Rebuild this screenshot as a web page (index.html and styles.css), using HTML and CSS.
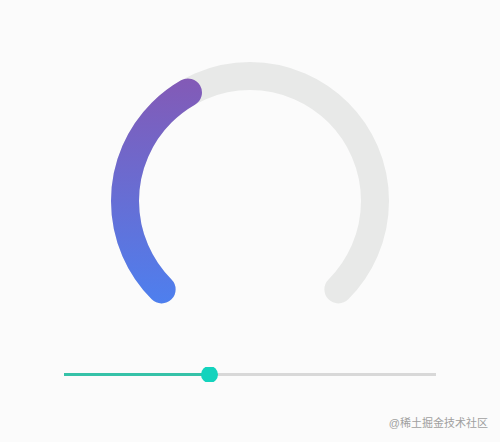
FILE: index.html
```html
<!DOCTYPE html>
<html lang="zh-CN">
<head>
  <meta charset="UTF-8" />
  <meta name="viewport" content="width=device-width, initial-scale=1.0" />
  <title>Progress</title>
  <link rel="stylesheet" href="styles.css">
</head>
<body>

  <main class="container">
    <svg class="gauge" viewBox="0 0 278 242" aria-hidden="true">
      <defs>
        <linearGradient id="gaugeColor" gradientUnits="userSpaceOnUse" x1="0" y1="16" x2="0" y2="240">
          <stop offset="0" stop-color="#835ab6" />
          <stop offset="1" stop-color="#4e7fee" />
        </linearGradient>
      </defs>
      <path class="gauge-track" d="M50.6 227.4 A125 125 0 1 1 227.4 227.4" />
      <path id="gaugeValue" class="gauge-value" pathLength="100" stroke-dasharray="39 200" d="M50.6 227.4 A125 125 0 1 1 227.4 227.4" />
    </svg>

    <input id="range" class="range" type="range" min="0" max="100" step="0.5" value="38.5" aria-label="进度" />
  </main>

  <footer class="credit">@稀土掘金技术社区</footer>

  <script>
    const range = document.getElementById('range');
    const gaugeValue = document.getElementById('gaugeValue');

    range.addEventListener('input', function () {
      gaugeValue.setAttribute('stroke-dasharray', range.value + ' 200');
      range.style.setProperty('--value', range.value + '%');
    });
  </script>
</body>
</html>
```

FILE: styles.css
```css
* {
  box-sizing: border-box;
}

body {
  display: flex;
  flex-direction: column;
  min-height: 100vh;
  margin: 0;
  background-color: #fbfbfb;
  font-family: "Liberation Sans", "Noto Sans CJK SC", sans-serif;
}

.container {
  display: flex;
  flex: 1;
  flex-direction: column;
  align-items: center;
  gap: 63px;
  padding: 62px 64px 0;
}

/* 圆弧 */
.gauge {
  width: 100%;
  max-width: 278px;
}

.gauge-track,
.gauge-value {
  fill: none;
  stroke-width: 28;
  stroke-linecap: round;
}

.gauge-track {
  stroke: #e8e9e8;
}

.gauge-value {
  stroke: url(#gaugeColor);
}

/* 滑块 */
.range {
  --value: 39%;
  -webkit-appearance: none;
  appearance: none;
  width: 100%;
  height: 15px;
  margin: 0;
  overflow: hidden;
  background: transparent;
}

.range::-webkit-slider-runnable-track {
  height: 3px;
  background: linear-gradient(to right, #36c2a8 var(--value), #d8d8d8 var(--value));
}

.range::-webkit-slider-thumb {
  -webkit-appearance: none;
  width: 17px;
  height: 17px;
  margin-top: -7px;
  border-radius: 50%;
  background: #14d3bd;
}

.credit {
  padding: 0 12px 11px;
  color: #a0a0a0;
  font-size: 11px;
  line-height: 16px;
  text-align: right;
}
```
